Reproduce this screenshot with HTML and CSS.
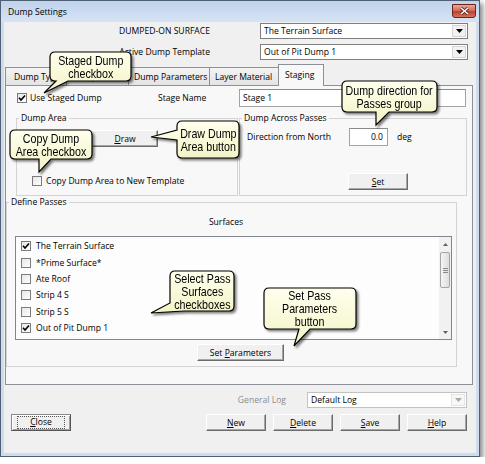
FILE: index.html
```html
<!DOCTYPE html>
<html>
<head>
<meta charset="utf-8">
<link rel="stylesheet" href="styles.css">
</head>
<body>
<div class="window">
  <div class="titlebar">
    <span class="title">Dump Settings</span>
    <span class="close-btn"><svg width="11" height="8" viewBox="0 0 11 8"><path d="M2 1 L9 7 M9 1 L2 7" stroke="#5a1a12" stroke-width="3"/><path d="M2 1 L9 7 M9 1 L2 7" stroke="#fff" stroke-width="1.6"/></svg></span>
  </div>
  <div class="client">
    <div class="field-row">
      <span class="field-label">DUMPED-ON SURFACE</span>
      <div class="combo"><span class="combo-text">The Terrain Surface</span><span class="combo-btn"><svg width="7" height="4" viewBox="0 0 7 4"><path d="M0 0 H7 L3.5 4 Z" fill="#000"/></svg></span></div>
    </div>
    <div class="field-row">
      <span class="field-label">Active Dump Template</span>
      <div class="combo"><span class="combo-text">Out of Pit Dump 1</span><span class="combo-btn"><svg width="7" height="4" viewBox="0 0 7 4"><path d="M0 0 H7 L3.5 4 Z" fill="#000"/></svg></span></div>
    </div>

    <div class="tabstrip">
      <div class="tab t1">Dump Type</div>
      <div class="tab t2">Dump Area</div>
      <div class="tab t3">Dump Parameters</div>
      <div class="tab t4">Layer Material</div>
      <div class="tab t5 active">Staging</div>
    </div>
    <div class="panel">
      <div class="stage-row">
        <div class="check"><span class="cb"><svg width="8" height="8" viewBox="0 0 8 8"><path d="M1 3.8 L3 6 L7 1.5" fill="none" stroke="#000" stroke-width="1.6"/></svg></span><span>Use Staged Dump</span></div>
        <span>Stage Name</span>
        <div class="input">Stage 1</div>
      </div>
      <div class="group-row">
        <fieldset class="group g-area">
          <legend>Dump Area</legend>
          <button class="btn draw-btn"><span><u>D</u>raw</span></button>
          <div class="check copy-row"><span class="cb"></span><span>Copy Dump Area to New Template</span></div>
        </fieldset>
        <fieldset class="group g-across">
          <legend>Dump Across Passes</legend>
          <div class="dir-row">
            <span class="dir-label">Direction from North</span>
            <div class="input num">0.0</div>
            <span class="deg">deg</span>
          </div>
          <button class="btn set-btn"><span><u>S</u>et</span></button>
        </fieldset>
      </div>
      <fieldset class="group g-passes">
        <legend>Define Passes</legend>
        <div class="surfaces">Surfaces</div>
        <div class="listbox">
          <div class="items">
            <div class="item"><span class="cb"><svg width="8" height="8" viewBox="0 0 8 8"><path d="M1 3.8 L3 6 L7 1.5" fill="none" stroke="#000" stroke-width="1.6"/></svg></span><span>The Terrain Surface</span></div>
            <div class="item"><span class="cb"></span><span>*Prime Surface*</span></div>
            <div class="item"><span class="cb"></span><span>Ate Roof</span></div>
            <div class="item"><span class="cb"></span><span>Strip 4 S</span></div>
            <div class="item"><span class="cb"></span><span>Strip 5 S</span></div>
            <div class="item"><span class="cb"><svg width="8" height="8" viewBox="0 0 8 8"><path d="M1 3.8 L3 6 L7 1.5" fill="none" stroke="#000" stroke-width="1.6"/></svg></span><span>Out of Pit Dump 1</span></div>
          </div>
          <div class="scrollbar">
            <div class="sb-arrow"><svg width="5" height="3" viewBox="0 0 5 3"><path d="M0 3 H5 L2.5 0 Z" fill="#606060"/></svg></div>
            <div class="sb-track">
              <div class="sb-thumb"><svg width="5" height="5" viewBox="0 0 5 5"><path d="M0 0.5 H5 M0 2.5 H5 M0 4.5 H5" stroke="#8a8a8a" stroke-width="1"/></svg></div>
            </div>
            <div class="sb-arrow"><svg width="5" height="3" viewBox="0 0 5 3"><path d="M0 0 H5 L2.5 3 Z" fill="#606060"/></svg></div>
          </div>
        </div>
        <button class="btn setparams-btn"><span>Set <u>P</u>arameters</span></button>
      </fieldset>
    </div>

    <div class="log-row">
      <span class="log-label">General Log</span>
      <div class="combo disabled"><span class="combo-text">Default Log</span><span class="combo-btn"><svg width="7" height="4" viewBox="0 0 7 4"><path d="M0 0 H7 L3.5 4 Z" fill="#a8a8a8"/></svg></span></div>
    </div>
    <div class="btn-row">
      <button class="btn close"><span class="focus"><u>C</u>lose</span></button>
      <span class="spacer"></span>
      <div class="btn-group">
        <button class="btn"><span><u>N</u>ew</span></button>
        <button class="btn"><span><u>D</u>elete</span></button>
        <button class="btn"><span><u>S</u>ave</span></button>
        <button class="btn"><span><u>H</u>elp</span></button>
      </div>
    </div>
  </div>

  <div class="callout c1">
    <svg width="81" height="29"><defs><linearGradient id="g1" x1="0" y1="0" x2="0" y2="1"><stop offset="0" stop-color="#ffffee"/><stop offset="1" stop-color="#f3f3c6"/></linearGradient></defs><path d="M5,0 H76 Q81,0 81,5 V24 Q81,29 76,29 H18 L-6,41 L6,29 H5 Q0,29 0,24 V5 Q0,0 5,0 Z" fill="url(#g1)" stroke="#000" stroke-width="1.2"/></svg>
    <div class="ctext">Staged Dump<br>checkbox</div>
  </div>
  <div class="callout c2">
    <svg width="62" height="37"><defs><linearGradient id="g2" x1="0" y1="0" x2="0" y2="1"><stop offset="0" stop-color="#ffffee"/><stop offset="1" stop-color="#f3f3c6"/></linearGradient></defs><path d="M5,0 H57 Q62,0 62,5 V32 Q62,37 57,37 H5 Q0,37 0,32 V19 L-26,16 L0,9 V5 Q0,0 5,0 Z" fill="url(#g2)" stroke="#000" stroke-width="1.2"/></svg>
    <div class="ctext">Draw Dump<br>Area button</div>
  </div>
  <div class="callout c3">
    <svg width="82" height="29"><defs><linearGradient id="g3" x1="0" y1="0" x2="0" y2="1"><stop offset="0" stop-color="#ffffee"/><stop offset="1" stop-color="#f3f3c6"/></linearGradient></defs><path d="M5,0 H77 Q82,0 82,5 V24 Q82,29 77,29 H41 L29,42 L29,29 H5 Q0,29 0,24 V5 Q0,0 5,0 Z" fill="url(#g3)" stroke="#000" stroke-width="1.2"/></svg>
    <div class="ctext">Copy Dump<br>Area checkbox</div>
  </div>
  <div class="callout c4">
    <svg width="95" height="31"><defs><linearGradient id="g4" x1="0" y1="0" x2="0" y2="1"><stop offset="0" stop-color="#ffffee"/><stop offset="1" stop-color="#f3f3c6"/></linearGradient></defs><path d="M5,0 H90 Q95,0 95,5 V26 Q95,31 90,31 H47 L34,44 L34,31 H5 Q0,31 0,26 V5 Q0,0 5,0 Z" fill="url(#g4)" stroke="#000" stroke-width="1.2"/></svg>
    <div class="ctext">Dump direction for<br>Passes group</div>
  </div>
  <div class="callout c5">
    <svg width="64" height="40"><defs><linearGradient id="g5" x1="0" y1="0" x2="0" y2="1"><stop offset="0" stop-color="#ffffee"/><stop offset="1" stop-color="#f3f3c6"/></linearGradient></defs><path d="M5,0 H59 Q64,0 64,5 V35 Q64,40 59,40 H14 L-19,42 L0,32 V5 Q0,0 5,0 Z" fill="url(#g5)" stroke="#000" stroke-width="1.2"/></svg>
    <div class="ctext">Select Pass<br>Surfaces<br>checkboxes</div>
  </div>
  <div class="callout c6">
    <svg width="92" height="41"><defs><linearGradient id="g6" x1="0" y1="0" x2="0" y2="1"><stop offset="0" stop-color="#ffffee"/><stop offset="1" stop-color="#f3f3c6"/></linearGradient></defs><path d="M5,0 H87 Q92,0 92,5 V36 Q92,41 87,41 H46 L30,58 L35,41 H5 Q0,41 0,36 V5 Q0,0 5,0 Z" fill="url(#g6)" stroke="#000" stroke-width="1.2"/></svg>
    <div class="ctext">Set Pass<br>Parameters<br>button</div>
  </div>
</div>
</body>
</html>
```

FILE: styles.css
```css
* { box-sizing: border-box; }

body {
  margin: 0;
  background: #fff;
  font-family: "Open Sans", "Noto Sans", sans-serif;
  font-size: 8.6px;
  color: #000;
}

.window {
  position: relative;
  width: 480px;
  height: 457px;
  border: 1px solid #4f5f74;
  background: #cfdcee;
  box-shadow: 3px 3px 5px rgba(0, 0, 0, 0.45);
  display: flex;
  flex-direction: column;
}

.titlebar {
  height: 21px;
  flex: none;
  display: flex;
  align-items: center;
  padding: 0 3px 0 7px;
  background: linear-gradient(#c0d3ec, #d6e3f4);
}

.title {
  font-size: 8.6px;
  color: #000;
}

.close-btn {
  margin-left: auto;
  align-self: flex-start;
  margin-top: 3px;
  width: 24px;
  height: 14px;
  border: 1px solid #6e2218;
  border-radius: 0 0 3px 3px;
  background: linear-gradient(#e9a899, #d46d58 45%, #c0402d 55%, #d2735d);
  display: flex;
  align-items: center;
  justify-content: center;
}

.client {
  flex: 1;
  margin: 0 3px 3px;
  background: #f0f0f0;
  padding-top: 1px;
}

.field-row {
  display: flex;
  align-items: center;
  height: 16px;
}

.field-row + .field-row { margin-top: 5px; }

.field-label {
  width: 206px;
  margin-right: 50px;
  text-align: right;
}

.combo {
  width: 208px;
  height: 16px;
  border: 1px solid #7f7f7f;
  background: #fff;
  display: flex;
  align-items: center;
}

.combo-text {
  flex: 1;
  padding-left: 3px;
  white-space: nowrap;
}

.combo-btn {
  width: 14px;
  height: 12px;
  margin-right: 1px;
  background: #f2f2f2;
  border: 1px solid #d4d4d4;
  display: flex;
  align-items: center;
  justify-content: center;
}

.combo.disabled {
  width: 160px;
  border-color: #c2c2c2;
}

.combo.disabled .combo-btn { border-color: #e4e4e4; background: #f7f7f7; }

/* tabs */
.tabstrip {
  display: flex;
  align-items: flex-end;
  height: 21px;
  margin: 4px 0 0 1px;
}

.tab {
  height: 18px;
  margin-right: -1px;
  border: 1px solid #8d9096;
  border-bottom: none;
  background: linear-gradient(#f3f3f3, #e4e4e4);
  display: flex;
  align-items: center;
  padding-left: 5px;
  white-space: nowrap;
  overflow: hidden;
}

.t1 { width: 62px; padding-left: 8px; }
.t2 { width: 63px; }
.t3 { width: 82px; }
.t4 { width: 70px; }
.t5 { width: 46px; padding-left: 6px; }

.tab.active {
  position: relative;
  z-index: 1;
  height: 22px;
  margin-bottom: -1px;
  background: #f8f8f8;
  padding-bottom: 2px;
}

.panel {
  width: 468px;
  height: 300px;
  margin-left: 1px;
  border: 1px solid #8d9096;
  background: #f8f8f8;
  padding-top: 3px;
}

.stage-row {
  display: grid;
  grid-template-columns: 141px 81px 227px;
  align-items: center;
  height: 18px;
  padding-left: 11px;
}

.check {
  display: flex;
  align-items: center;
  gap: 3px;
}

.cb {
  width: 10px;
  height: 10px;
  flex: none;
  border: 1px solid #7b7b7b;
  background: linear-gradient(135deg, #e6e6e6, #ffffff);
  display: flex;
  align-items: center;
  justify-content: center;
}

.input {
  height: 18px;
  border: 1px solid #a3a3a3;
  border-top-color: #8a8a8a;
  background: #fff;
  display: flex;
  align-items: center;
  padding-left: 3px;
}

.input.num {
  width: 39px;
  justify-content: flex-end;
  padding: 0 4px 0 0;
}

/* group boxes */
.group-row {
  display: flex;
  gap: 1px;
  height: 84px;
  margin: 5px 0 0 10px;
}

fieldset.group {
  margin: 0;
  padding: 0;
  min-width: 0;
  border: 1px solid #d3d3d3;
}

fieldset.group legend {
  padding: 0 2px;
  margin-left: 2px;
  line-height: 12px;
}

.g-area { width: 222px; }
.g-across { width: 228px; }

.btn {
  display: flex;
  align-items: center;
  justify-content: center;
  height: 17px;
  padding: 0;
  font: inherit;
  color: #000;
  background: #f0f0f0;
  border: 1px solid;
  border-color: #ffffff #6b6b6b #6b6b6b #ffffff;
  box-shadow: inset -1px -1px #a6a6a6;
}

.draw-btn { width: 66px; margin: 6px 0 0 75px; }

.copy-row {
  height: 12px;
  margin: 28px 0 0 15px;
  gap: 4px;
}

.dir-row {
  display: flex;
  align-items: center;
  height: 18px;
  margin-top: 4px;
  padding-left: 7px;
}

.dir-label { width: 102px; }
.deg { margin-left: 9px; }

.set-btn { width: 60px; margin: 27px 0 0 108px; }

.g-passes {
  width: 451px;
  height: 171px;
  margin: 5px 0 0 10px;
}

.surfaces {
  margin-top: 8px;
  line-height: 12px;
  text-align: center;
  padding-right: 11px;
}

.listbox {
  width: 437px;
  height: 104px;
  margin: 8px 0 0 8px;
  border: 1px solid #82858c;
  background: #fdfdfd;
  display: flex;
}

.items {
  flex: 1;
  padding: 1px 0 0 5px;
}

.item {
  height: 16.4px;
  display: flex;
  align-items: center;
  gap: 5px;
}

.scrollbar {
  width: 12px;
  display: flex;
  flex-direction: column;
  background: #f1f1f1;
}

.sb-arrow {
  height: 14px;
  display: flex;
  align-items: center;
  justify-content: center;
}

.sb-track { flex: 1; padding-top: 1px; }

.sb-thumb {
  height: 36px;
  margin: 0 1px;
  border: 1px solid #a2a6ad;
  border-radius: 2px;
  background: linear-gradient(90deg, #f4f4f4, #dedede);
  display: flex;
  align-items: center;
  justify-content: center;
}

.setparams-btn { width: 87px; margin: 4px 0 0 190px; }

/* bottom */
.log-row {
  display: flex;
  justify-content: flex-end;
  align-items: center;
  height: 16px;
  margin-top: 7px;
  padding-right: 9px;
}

.log-label {
  color: #8c8c8c;
  margin-right: 21px;
}

.btn-row {
  display: flex;
  margin-top: 6px;
  padding: 0 9px 0 7px;
}

.btn-row .btn { width: 60px; }
.spacer { flex: 1; }

.btn-group {
  display: flex;
  gap: 7px;
}

.btn.close {
  border-color: #8a8a8a #555 #555 #8a8a8a;
  box-shadow: inset 1px 1px #fff, inset -1px -1px #a0a0a0;
}

.focus {
  border: 1px dotted #555;
  padding: 0 12px;
  line-height: 11px;
}

/* callouts */
.callout {
  position: absolute;
  display: flex;
  align-items: center;
  justify-content: center;
  text-align: center;
  font-family: "Liberation Sans", Arial, sans-serif;
  font-size: 13px;
  line-height: 13px;
}

.callout svg {
  position: absolute;
  left: 0;
  top: 0;
  overflow: visible;
  filter: drop-shadow(2px 2px 1.2px rgba(0, 0, 0, 0.5));
}

.ctext {
  position: relative;
  white-space: nowrap;
  transform: scaleX(0.82);
}

.c1 { left: 49px; top: 51px; width: 81px; height: 29px; }
.c2 { left: 176px; top: 120px; width: 62px; height: 37px; }
.c3 { left: 9px; top: 129px; width: 82px; height: 29px; }
.c4 { left: 341px; top: 80px; width: 95px; height: 31px; }
.c5 { left: 169px; top: 270px; width: 64px; height: 40px; }
.c6 { left: 263px; top: 287px; width: 92px; height: 41px; }
```
